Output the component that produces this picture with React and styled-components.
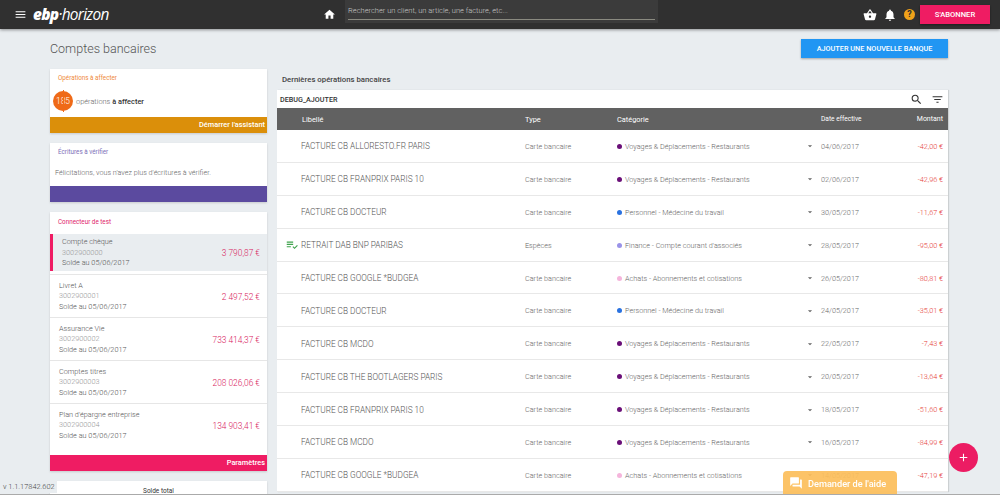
import React from 'react';
import styled, { createGlobalStyle } from 'styled-components';
import {
  MdMenu,
  MdHome,
  MdShoppingBasket,
  MdNotifications,
  MdSearch,
  MdFilterList,
  MdPlaylistAddCheck,
  MdQuestionAnswer,
  MdAdd,
  MdArrowDropDown,
} from 'react-icons/md';

const VOYAGES = { color: '#6a0f78', label: 'Voyages & Déplacements - Restaurants' };
const MEDECINE = { color: '#2a72e0', label: 'Personnel - Médecine du travail' };
const FINANCE = { color: '#9a93e8', label: 'Finance - Compte courant d\'associés' };
const ACHATS = { color: '#f5b5dc', label: 'Achats - Abonnements et cotisations' };

const operations = [
  { name: 'FACTURE CB ALLORESTO.FR PARIS', type: 'Carte bancaire', cat: VOYAGES, date: '04/06/2017', amount: '-42,00 €' },
  { name: 'FACTURE CB FRANPRIX PARIS 10', type: 'Carte bancaire', cat: VOYAGES, date: '02/06/2017', amount: '-42,96 €' },
  { name: 'FACTURE CB DOCTEUR', type: 'Carte bancaire', cat: MEDECINE, date: '30/05/2017', amount: '-11,67 €' },
  { name: 'RETRAIT DAB BNP PARIBAS', type: 'Espèces', cat: FINANCE, date: '28/05/2017', amount: '-95,00 €', checked: true },
  { name: 'FACTURE CB GOOGLE *BUDGEA', type: 'Carte bancaire', cat: ACHATS, date: '26/05/2017', amount: '-80,81 €' },
  { name: 'FACTURE CB DOCTEUR', type: 'Carte bancaire', cat: MEDECINE, date: '24/05/2017', amount: '-35,01 €' },
  { name: 'FACTURE CB MCDO', type: 'Carte bancaire', cat: VOYAGES, date: '22/05/2017', amount: '-7,43 €' },
  { name: 'FACTURE CB THE BOOTLAGERS PARIS', type: 'Carte bancaire', cat: VOYAGES, date: '20/05/2017', amount: '-13,64 €' },
  { name: 'FACTURE CB FRANPRIX PARIS 10', type: 'Carte bancaire', cat: VOYAGES, date: '18/05/2017', amount: '-51,60 €' },
  { name: 'FACTURE CB MCDO', type: 'Carte bancaire', cat: VOYAGES, date: '16/05/2017', amount: '-84,99 €' },
  { name: 'FACTURE CB GOOGLE *BUDGEA', type: 'Carte bancaire', cat: ACHATS, date: '14/05/2017', amount: '-47,19 €' },
];

const accounts = [
  { name: 'Compte chèque', number: '3002900000', amount: '3 790,87 €', active: true },
  { name: 'Livret A', number: '3002900001', amount: '2 497,52 €' },
  { name: 'Assurance Vie', number: '3002900002', amount: '733 414,37 €' },
  { name: 'Comptes titres', number: '3002900003', amount: '208 026,06 €' },
  { name: 'Plan d\'épargne entreprise', number: '3002900004', amount: '134 903,41 €' },
];

function App() {
  return (
    <>
      <GlobalStyle />
      <Navbar>
        <MenuButton><MdMenu /></MenuButton>
        <Logo><b>ebp</b><span>·horizon</span></Logo>
        <HomeButton><MdHome /></HomeButton>
        <SearchBox>Rechercher un client, un article, une facture, etc...</SearchBox>
        <NavIcons>
          <MdShoppingBasket size={14} />
          <MdNotifications size={14} />
          <HelpBadge>?</HelpBadge>
        </NavIcons>
        <SubscribeButton>S'ABONNER</SubscribeButton>
      </Navbar>

      <Page>
        <TitleRow>
          <h1>Comptes bancaires</h1>
          <AddBankButton>AJOUTER UNE NOUVELLE BANQUE</AddBankButton>
        </TitleRow>

        <Columns>
          <Sidebar>
            <Card>
              <CardTitle $color="#ef8a3c">Opérations à affecter</CardTitle>
              <AffectRow>
                <CountBadge>185</CountBadge>
                <span>opérations <b>à affecter</b></span>
              </AffectRow>
              <CardFooter $color="#db8f0a">Démarrer l'assistant</CardFooter>
            </Card>

            <Card>
              <CardTitle $color="#7d70b8">Écritures à vérifier</CardTitle>
              <Congrats>Félicitations, vous n'avez plus d'écritures à vérifier.</Congrats>
              <CardFooter $color="#5b4a9f" />
            </Card>

            <Card>
              <CardTitle $color="#e0246a" $tall>Connecteur de test</CardTitle>
              {accounts.map((a) => (
                <AccountRow key={a.number} $active={a.active}>
                  <div>
                    <AccountName>{a.name}</AccountName>
                    <AccountNumber>{a.number}</AccountNumber>
                    <AccountName>Solde au 05/06/2017</AccountName>
                  </div>
                  <AccountAmount>{a.amount}</AccountAmount>
                </AccountRow>
              ))}
              <CardFooter $color="#ef1c63" $spaced>Paramètres</CardFooter>
            </Card>

            <Card>
              <TotalLabel>Solde total</TotalLabel>
            </Card>
          </Sidebar>

          <Main>
            <SectionTitle>Dernières opérations bancaires</SectionTitle>
            <Table>
              <Toolbar>
                <span>DEBUG_AJOUTER</span>
                <ToolIcons>
                  <MdSearch size={13} />
                  <MdFilterList size={13} />
                </ToolIcons>
              </Toolbar>
              <TableHead>
                <span />
                <span>Libellé</span>
                <span>Type</span>
                <span>Catégorie</span>
                <span />
                <DateHead>Date effective</DateHead>
                <AmountHead>Montant</AmountHead>
              </TableHead>
              {operations.map((op) => (
                <TableRow key={op.date}>
                  <CheckCell>{op.checked && <MdPlaylistAddCheck size={14} />}</CheckCell>
                  <OpName>{op.name}</OpName>
                  <SmallCell>{op.type}</SmallCell>
                  <SmallCell>
                    <Dot $color={op.cat.color} />
                    {op.cat.label}
                  </SmallCell>
                  <CaretCell><MdArrowDropDown size={10} /></CaretCell>
                  <SmallCell>{op.date}</SmallCell>
                  <Amount>{op.amount}</Amount>
                </TableRow>
              ))}
            </Table>
          </Main>
        </Columns>
      </Page>

      <Version>v 1.1.17842.602</Version>
      <HelpTab><MdQuestionAnswer size={14} />Demander de l'aide</HelpTab>
      <Fab><MdAdd size={13} /></Fab>
      <BottomLine />
    </>
  );
}

const GlobalStyle = createGlobalStyle`
  html, body {
    margin: 0;
    height: 100%;
    overflow: hidden;
    background: #e9edf0;
    font-family: Roboto, "Liberation Sans", sans-serif;
  }
  * { box-sizing: border-box; }
`;

const Navbar = styled.header`
  height: 29px;
  background: #303030;
  display: flex;
  align-items: center;
  color: #fff;
  box-shadow: 0 1px 3px rgba(0, 0, 0, 0.4);
`;

const MenuButton = styled.div`
  width: 13px;
  margin-left: 14px;
  display: flex;
  font-size: 13px;
`;

const Logo = styled.div`
  margin-left: 6px;
  font-family: "Open Sans", sans-serif;
  font-style: italic;
  font-size: 15.4px;
  letter-spacing: -0.7px;
  line-height: 29px;
  width: 290px;

  b { font-weight: 800; }
  span { font-weight: 400; }
`;

const HomeButton = styled.div`
  width: 22px;
  display: flex;
  font-size: 13px;
`;

const SearchBox = styled.div`
  align-self: flex-start;
  width: 313px;
  height: 23px;
  padding: 6px 3px 0;
  background: #3b3b3b;
  font-size: 7.5px;
  font-weight: 300;
  color: #c8c8c8;
  position: relative;

  &::after {
    content: '';
    position: absolute;
    left: 3px;
    right: 3px;
    bottom: 3px;
    height: 1px;
    background: #8a8a80;
  }
`;

const NavIcons = styled.div`
  margin-left: auto;
  display: flex;
  align-items: center;
  gap: 6px;
`;

const HelpBadge = styled.div`
  width: 11px;
  height: 11px;
  margin-left: 1px;
  border-radius: 50%;
  background: #f0a21a;
  color: #303030;
  font-size: 9px;
  font-weight: 700;
  line-height: 11px;
  text-align: center;
`;

const SubscribeButton = styled.div`
  width: 70px;
  height: 19px;
  margin: 0 10px 0 5px;
  background: #ef1c63;
  font-size: 7.6px;
  font-weight: 500;
  line-height: 19px;
  text-align: center;
  box-shadow: 0 1px 2px rgba(0, 0, 0, 0.4);
`;

const Page = styled.main`
  padding: 10px 52px 0 50px;
`;

const TitleRow = styled.div`
  height: 30px;
  display: flex;
  align-items: flex-start;
  justify-content: space-between;

  h1 {
    margin: 0;
    font-size: 12.5px;
    font-weight: 300;
    line-height: 20px;
    color: #555;
  }
`;

const AddBankButton = styled.div`
  width: 147px;
  height: 19px;
  background: #2196f3;
  color: #fff;
  font-size: 7.3px;
  font-weight: 500;
  line-height: 19px;
  text-align: center;
  box-shadow: 0 1px 2px rgba(0, 0, 0, 0.3);
`;

const Columns = styled.div`
  display: grid;
  grid-template-columns: 217px 671px;
  gap: 10px;
`;

const Sidebar = styled.aside`
  display: flex;
  flex-direction: column;
  gap: 10px;
`;

const Card = styled.section`
  background: #fff;
  box-shadow: 0 1px 2px rgba(0, 0, 0, 0.15);
`;

const CardTitle = styled.div`
  padding-left: 8px;
  height: ${(p) => (p.$tall ? '22px' : '16px')};
  font-size: 6.3px;
  line-height: ${(p) => (p.$tall ? '20px' : '18px')};
  color: ${(p) => p.$color};
`;

const AffectRow = styled.div`
  height: 32px;
  padding-left: 3px;
  display: flex;
  align-items: center;
  gap: 3px;
  font-size: 7.4px;
  font-weight: 300;
  color: #666;

  b {
    font-weight: 500;
    color: #333;
  }
`;

const CountBadge = styled.div`
  width: 20px;
  height: 20px;
  border-radius: 50%;
  background: #ef6a18;
  color: #fff;
  font-size: 8.4px;
  font-weight: 300;
  line-height: 20px;
  text-align: center;
  position: relative;

  &::after {
    content: '';
    position: absolute;
    left: 9.5px;
    top: -1px;
    width: 1px;
    height: 22px;
    background: #ef6a18;
  }

  span { position: relative; }
`;

const Congrats = styled.div`
  height: 27px;
  padding: 9px 5px 0;
  font-size: 7.2px;
  font-weight: 300;
  color: #666;
`;

const CardFooter = styled.div`
  height: 16px;
  padding-right: 2px;
  margin-top: ${(p) => (p.$spaced ? '9px' : '0')};
  background: ${(p) => p.$color};
  color: #fff;
  font-size: 7.4px;
  font-weight: 500;
  line-height: 15px;
  text-align: right;
`;

const AccountRow = styled.div`
  height: ${(p) => (p.$active ? '37px' : '43px')};
  margin-bottom: ${(p) => (p.$active ? '3px' : '0')};
  padding: 1px 7px 0 9px;
  display: flex;
  align-items: center;
  justify-content: space-between;
  background: ${(p) => (p.$active ? '#e9edf0' : '#fff')};
  border-left: ${(p) => (p.$active ? '3px solid #ef1c63' : 'none')};
  border-top: ${(p) => (p.$active ? 'none' : '1px solid #e6e6e6')};
`;

const AccountName = styled.div`
  font-size: 7.3px;
  font-weight: 300;
  line-height: 10.5px;
  color: #555;
`;

const AccountNumber = styled(AccountName)`
  color: #999;
`;

const AccountAmount = styled.div`
  font-size: 8.4px;
  font-weight: 300;
  color: #d81b60;
`;

const TotalLabel = styled.div`
  padding-top: 6px;
  height: 40px;
  font-size: 6.5px;
  text-align: center;
  color: #333;
`;

const Main = styled.div`
  min-width: 0;
`;

const SectionTitle = styled.div`
  height: 21px;
  padding: 6px 0 0 5px;
  font-size: 7.8px;
  font-weight: 500;
  color: #444;
`;

const Table = styled.div`
  box-shadow: 1px 0 1px rgba(0, 0, 0, 0.12);
`;

const Toolbar = styled.div`
  height: 18px;
  padding: 0 4px 0 3px;
  display: flex;
  align-items: center;
  justify-content: space-between;
  background: #fff;
  font-size: 7.2px;
  font-weight: 500;
  color: #333;
`;

const ToolIcons = styled.div`
  display: flex;
  align-items: center;
  gap: 8px;
  color: #333;
`;

const rowGrid = `
  display: grid;
  grid-template-columns: 24px 224px 92px 187px 17px 87px 40px;
  align-items: center;
`;

const TableHead = styled.div`
  ${rowGrid}
  height: 22px;
  background: #616161;
  color: #fff;
  font-size: 7.4px;
  font-weight: 400;

  > span:nth-child(2) { padding-left: 1px; }
`;

const DateHead = styled.span`
  font-size: 6.6px;
`;

const AmountHead = styled.span`
  text-align: right;
  padding-right: 5px;
  font-size: 7px;
`;

const TableRow = styled.div`
  ${rowGrid}
  height: 32.9px;
  padding-top: 1px;
  background: #fff;
  border-bottom: 1px solid #e8e8e8;
`;

const CheckCell = styled.div`
  display: flex;
  padding-left: 8px;
  color: #3fa34d;
`;

const OpName = styled.div`
  font-size: 8.25px;
  font-weight: 300;
  color: #555;
  white-space: nowrap;
`;

const SmallCell = styled.div`
  display: flex;
  align-items: center;
  font-size: 7.25px;
  font-weight: 300;
  color: #666;
  white-space: nowrap;
`;

const Dot = styled.i`
  width: 5px;
  height: 5px;
  margin-right: 3px;
  border-radius: 50%;
  background: ${(p) => p.$color};
`;

const CaretCell = styled.div`
  display: flex;
  padding-left: 1px;
  color: #666;
`;

const Amount = styled.div`
  padding-right: 5px;
  font-size: 7.25px;
  font-weight: 300;
  color: #e53935;
  text-align: right;
  white-space: nowrap;
`;

const Version = styled.div`
  position: fixed;
  left: 0;
  bottom: 2px;
  width: 57px;
  height: 13px;
  padding-left: 3px;
  background: #e9edf0;
  font-size: 7.4px;
  font-weight: 300;
  line-height: 13px;
  color: #444;
`;

const HelpTab = styled.div`
  position: fixed;
  left: 783px;
  bottom: 0;
  width: 114px;
  height: 24px;
  padding-left: 6px;
  display: flex;
  align-items: center;
  gap: 5px;
  border-radius: 4px 4px 0 0;
  background: rgba(252, 190, 90, 0.92);
  color: #fff;
  font-size: 9.2px;
  font-weight: 500;
`;

const Fab = styled.div`
  position: fixed;
  left: 949px;
  top: 443px;
  width: 29px;
  height: 29px;
  display: flex;
  align-items: center;
  justify-content: center;
  border-radius: 50%;
  background: #ec1c63;
  color: #fff;
`;

const BottomLine = styled.div`
  position: fixed;
  left: 0;
  right: 0;
  bottom: 0;
  height: 1px;
  background: #aaa;
`;

export default App;
